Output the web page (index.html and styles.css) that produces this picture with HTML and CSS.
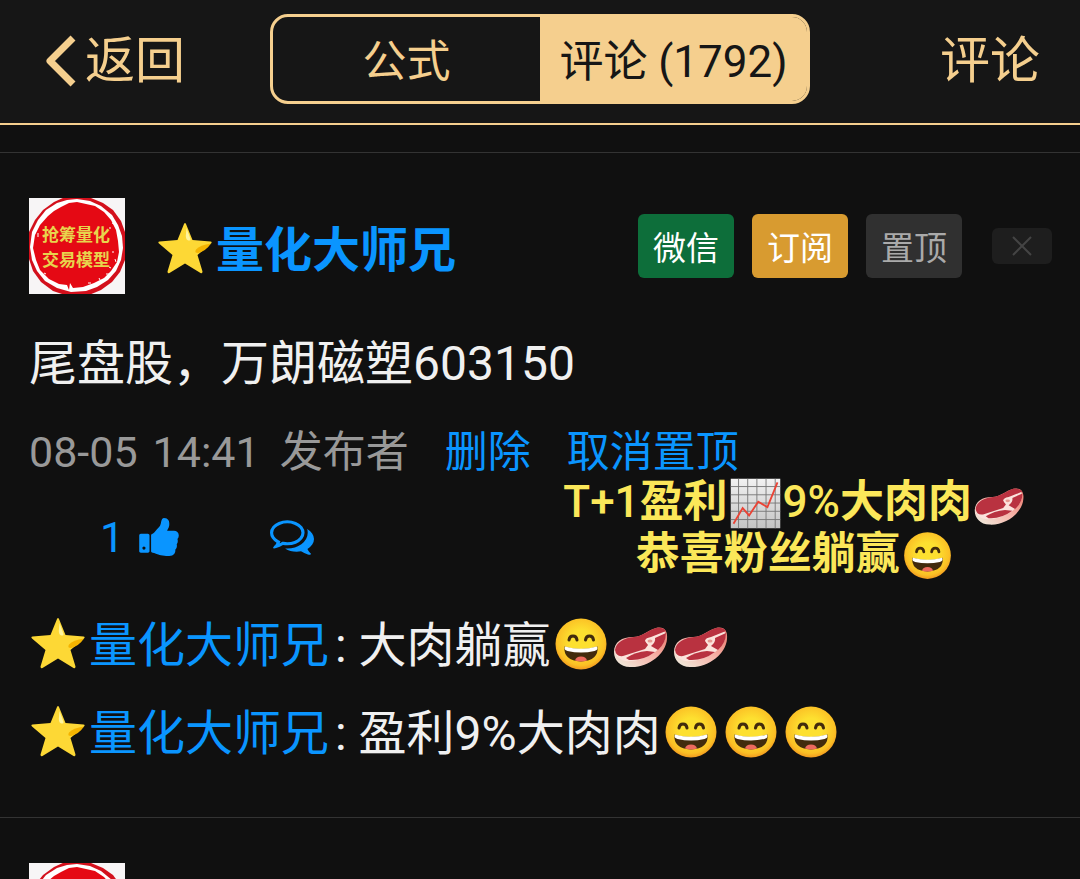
FILE: index.html
```html
<!DOCTYPE html>
<html lang="zh-CN">
<head>
    <meta charset="UTF-8">
    <meta name="viewport" content="width=device-width, initial-scale=1.0">
    <title>评论</title>
    <link rel="stylesheet" href="styles.css">
</head>
<body>

<!-- 图标定义 -->
<svg class="icon-defs" aria-hidden="true">
    <defs>
        <linearGradient id="paper" x1="0" y1="0" x2="0" y2="1">
            <stop offset="0" stop-color="#f2f2f2"/>
            <stop offset="1" stop-color="#c4c4c4"/>
        </linearGradient>
        <radialGradient id="face" cx="0.5" cy="0.45" r="0.55">
            <stop offset="0.4" stop-color="#fde030"/>
            <stop offset="0.85" stop-color="#fbc025"/>
            <stop offset="1" stop-color="#f29a1f"/>
        </radialGradient>
        <linearGradient id="fat" x1="1" y1="0" x2="0" y2="1">
            <stop offset="0.2" stop-color="#ee8c80"/>
            <stop offset="0.5" stop-color="#f7b5aa"/>
            <stop offset="0.9" stop-color="#f0e4d6"/>
        </linearGradient>
    </defs>
    <symbol id="star" viewBox="0 0 60 60">
        <path d="M28 5Q29 3 30 5L36.500 21L54.500 22.500Q56.500 23 55 24.500L41.500 36L46.500 52.500Q46.500 55 44.500 54L29 44.500L13.500 54Q11.500 55 11.500 52.500L16.500 36L3 24.500Q1.500 23 3.500 22.500L21.500 21Z" fill="#fdd835"/>
        <path d="M30.500 9L34.500 20Q35 22 32.500 21.500Q30 21 29.800 17Z" fill="#fff59d"/>
        <path d="M55 24.500Q50 32 42 34Q38 34 40 30.500Q44 26 55 24.500Z" fill="#f4b400"/>
    </symbol>
    <symbol id="smile" viewBox="0 0 60 60">
        <circle cx="30" cy="30" r="25.500" fill="url(#face)"/>
        <path d="M18 26Q18.500 22 22 22T26 26M34.500 26Q35 22 38.500 22T42.500 26" fill="none" stroke="#422b0d" stroke-width="3" stroke-linecap="round"/>
        <path d="M13.500 32.500Q30 37.500 46.500 32.500Q48 46.500 30 47.500Q12 46.500 13.500 32.500Z" fill="#422b0d"/>
        <path d="M14 32.500Q30 37 46 32.500Q47.500 36 43.500 37Q30 40 16.500 37Q12.500 36 14 32.500Z" fill="#fff"/>
        <path d="M24 46.500Q25 42.500 30 42.500T36 46.500Q30 48.500 24 46.500Z" fill="#ed6a5e"/>
    </symbol>
    <symbol id="meat" viewBox="0 0 60 60">
        <path d="M3 38C3 28 11 23 22 23C31 23 37 16 45 14C53 12 57 17 56 25C55 40 37 54 19 53C9 53 3 46 3 38Z" fill="url(#fat)"/>
        <path d="M4 36C5 28 12 24 23 24C32 23 38 17 46 15C52 14 56 18 54 25C51 36 35 46 20 47C10 48 4 43 4 36Z" fill="#fbe3dc"/>
        <path d="M4 36C5 28 13 24 23 23C32 22 38 16 45 14Q52 13 55 17L40 23Q34 24 34 27L37 31L34 35L12 42Q5 43 4 36Z" fill="#b93240"/>
        <path d="M44 24L55 19Q55 29 47 36L40 32Q45 28 44 24Z" fill="#b93240"/>
        <path d="M15 44Q24 38 36 37L44 38Q32 47 18 46Z" fill="#b93240"/>
        <ellipse cx="39" cy="27" rx="4" ry="3" fill="#fbe3dc"/>
        <ellipse cx="39" cy="27" rx="2.500" ry="1.500" fill="#e79a92"/>
    </symbol>
    <symbol id="chart" viewBox="0 0 60 60">
        <path d="M3 3H57V57H3Z" fill="url(#paper)"/>
        <path d="M11.500 3V57M21.500 3V57M31.500 3V57M41.500 3V57M51.500 3V57M3 11.500H57M3 20.500H57M3 29.500H57M3 38.500H57M3 47.500H57" stroke="#777" stroke-width="1"/>
        <path d="M6 52L16 35L23 43L33 28L43 34L54 7" fill="none" stroke="#ea4335" stroke-width="2"/>
    </symbol>
    <symbol id="thumb" viewBox="64 128 1600 1536">
        <path d="M320 1344q0-26-19-45t-45-19q-27 0-45.500 19t-18.500 45q0 27 18.500 45.500t45.500 18.500q26 0 45-18.500t19-45.500zm160-512v640q0 26-19 45t-45 19h-288q-26 0-45-19t-19-45v-640q0-26 19-45t45-19h288q26 0 45 19t19 45zm1184 0q0 86-55 149 15 44 15 76 3 76-43 137 17 56 0 117-15 57-54 94 9 112-49 181-64 76-197 78h-129q-66 0-144-15.500t-121.500-29-120.500-39.500q-123-43-158-44-26-1-45-19.500t-19-44.500v-641q0-25 18-43.500t43-20.500q24-2 76-59t101-121q68-87 101-120 18-18 31-48t17.500-48.500 13.500-60.500q7-39 12.500-61t19.500-52 34-50q19-19 45-19 46 0 82.500 10.500t60 26 40 40.500 24 45 12 50 5 45 .5 39q0 38-9.500 76t-19 60-27.500 56q-3 6-10 18t-11 22-8 24h277q78 0 135 57t57 135z" fill="currentColor"/>
    </symbol>
    <symbol id="bubbles" viewBox="0 256 1792 1408">
        <path d="M704 384q-153 0-286 52t-211.500 141-78.500 191q0 82 53 158t149 132l97 56-35 84q34-20 62-39l44-31 53 10q78 14 153 14 153 0 286-52t211.500-141 78.500-191-78.500-191-211.500-141-286-52zm0-128q191 0 353.500 68.500t256.500 186.500 94 257-94 257-256.500 186.500-353.500 68.500q-86 0-176-16-124 88-278 128-36 9-86 16h-3q-11 0-20.500-8t-11.500-21q-1-3-1-6.500t.5-6.500 2-6l2.500-5 3.500-5.500 4-5 4.500-5 4-4.500q5-6 23-25t26-29.500 22.500-29 25-38.500 20.500-44q-124-72-195-177t-71-224q0-139 94-257t256.500-186.500 353.500-68.500zm822 1169q10 24 20.500 44t25 38.500 22.500 29 26 29.500 23 25q1 1 4 4.500t4.500 5 4 5 3.500 5.500l2.500 5 2 6 .5 6.500-1 6.500q-3 14-13 22t-22 7q-50-7-86-16-154-40-278-128-90 16-176 16-271 0-472-132 58 4 88 4 161 0 309-45t264-129q125-92 192-212t67-254q0-77-23-152 129 71 204 178t75 230q0 120-71 224.500t-195 176.500z" fill="currentColor"/>
    </symbol>
    <symbol id="seal" viewBox="0 0 96 96">
        <path d="M0 0H96V96H0Z" fill="#f7f5f6"/>
        <path d="M48 -1L62 0L74 5L84 12L92 23L96 34V62L91 74L83 84L72 92L60 97H36L24 93L12 84L4 73L0 61V34L6 22L14 12L25 4L36 -1Z" fill="#d3101c"/>
        <path d="M48 1L61 3L72 8L83 17L89 27L93 38L94 50L92 62L87 73L79 82L68 89L57 93L42 94L28 90L16 83L8 73L3 62L1 49L3 34L9 22L17 12L28 5L38 2Z" fill="#fff"/>
        <path d="M48 4L57 6L66 8L75 14L82 22L87 32L89 43L90 54L88 64L82 73L75 80L65 85L54 89L44 90L41 85L40 92L38 87L30 86L20 81L11 72L7 62L4 50L6 37L11 27L19 18L25 13L32 9L40 5Z" fill="#e50914"/>
        <path d="M83 25l2 1M80 30l2 0M86 61l1 3M80 69l2 1M77 76l3 0M70 80l1 2M83 54l2 0M59 85l3 0M9 35l0 4M15 75l2 1" stroke="#fff" stroke-width="1"/>
    </symbol>
</svg>

<div class="app">
    <!-- 顶部导航 -->
    <header class="topbar">
        <a class="back" href="#">
            <svg class="chevron" viewBox="0 0 30 52" aria-hidden="true">
                <path d="M27 3L4 26L27 49" fill="none" stroke="currentColor" stroke-width="7" stroke-linejoin="round"/>
            </svg>
            返回
        </a>
        <nav class="tabs">
            <button class="tab" type="button">公式</button>
            <button class="tab active" type="button">评论 (1792)</button>
        </nav>
        <a class="write" href="#">评论</a>
    </header>

    <!-- 评论列表 -->
    <main class="feed">
        <article class="post">
            <div class="post-head">
                <svg class="avatar" viewBox="0 0 96 96">
                    <use href="#seal"/>
                    <text class="seal-text" x="47" y="43">抢筹量化</text>
                    <text class="seal-text" x="47" y="68">交易模型</text>
                </svg>
                <a class="author" href="#"><svg class="emoji" aria-hidden="true"><use href="#star"/></svg>量化大师兄</a>
                <div class="tools">
                    <button class="tool wechat" type="button">微信</button>
                    <button class="tool subscribe" type="button">订阅</button>
                    <button class="tool pin" type="button">置顶</button>
                </div>
                <button class="close" type="button" aria-label="关闭">
                    <svg class="cross" viewBox="0 0 20 20" aria-hidden="true">
                        <path d="M1 1L19 19M19 1L1 19" stroke="currentColor" stroke-width="2"/>
                    </svg>
                </button>
            </div>

            <p class="message">尾盘股，万朗磁塑603150</p>

            <div class="meta">
                <div class="posted">
                    <time><span class="day">08-05</span>14:41</time>
                    <span>发布者</span>
                </div>
                <a href="#">删除</a>
                <a href="#">取消置顶</a>
            </div>

            <div class="actions">
                <button class="action" type="button" aria-label="点赞">1 <svg class="thumb" aria-hidden="true"><use href="#thumb"/></svg></button>
                <button class="action" type="button" aria-label="回复"><svg class="bubbles" aria-hidden="true"><use href="#bubbles"/></svg></button>
            </div>

            <!-- 叠加在帖子上的黄色文字 -->
            <div class="caption">
                <span class="latin">T+1</span>盈利<svg class="emoji" aria-hidden="true"><use href="#chart"/></svg><span class="latin">9%</span>大肉肉<svg class="emoji" aria-hidden="true"><use href="#meat"/></svg><br>
                恭喜粉丝躺赢<svg class="emoji" aria-hidden="true"><use href="#smile"/></svg>
            </div>

            <div class="replies">
                <p class="reply"><a href="#"><svg class="emoji" aria-hidden="true"><use href="#star"/></svg>量化大师兄</a>: 大肉躺赢<svg class="emoji" aria-hidden="true"><use href="#smile"/></svg><svg class="emoji" aria-hidden="true"><use href="#meat"/></svg><svg class="emoji" aria-hidden="true"><use href="#meat"/></svg></p>
                <p class="reply"><a href="#"><svg class="emoji" aria-hidden="true"><use href="#star"/></svg>量化大师兄</a>: 盈利9%大肉肉<svg class="emoji" aria-hidden="true"><use href="#smile"/></svg><svg class="emoji" aria-hidden="true"><use href="#smile"/></svg><svg class="emoji" aria-hidden="true"><use href="#smile"/></svg></p>
            </div>
        </article>

        <article class="post">
            <div class="post-head">
                <svg class="avatar" viewBox="0 0 96 96" aria-hidden="true"><use href="#seal"/></svg>
            </div>
        </article>
    </main>
</div>

</body>
</html>
```
FILE: styles.css
```css
* {
    box-sizing: border-box;
}

body {
    margin: 0;
    background: #101010;
    color: #f0f0f0;
    font-family: Roboto, "Noto Sans CJK SC", sans-serif;
    font-size: 48px;
}

a {
    color: #0a95ff;
    text-decoration: none;
}

button {
    padding: 0;
    border: none;
    background: none;
    color: inherit;
    font-family: inherit;
    cursor: pointer;
}

.icon-defs {
    display: block;
    width: 0;
    height: 0;
}

.app {
    display: flex;
    flex-direction: column;
    height: 100vh;
}

/* 顶部导航 */
.topbar {
    display: flex;
    align-items: center;
    padding: 14px 40px 19px;
    background: #161616;
    border-bottom: 2px solid #f5cf8e;
}

.back,
.write {
    flex: 1;
    padding-top: 4px;
    color: #f5cf8e;
    font-size: 50px;
    line-height: 64px;
}

.back {
    display: flex;
    align-items: center;
    gap: 9px;
}

.write {
    text-align: right;
}

.chevron {
    width: 30px;
    height: 52px;
    margin-left: 6px;
}

.tabs {
    display: flex;
    width: 50vw;
    height: 90px;
    border: 3px solid #f5cf8e;
    border-radius: 18px;
    overflow: hidden;
}

.tab {
    flex: 1 1 0;
    padding-bottom: 2px;
    color: #f5cf8e;
    font-size: 44px;
}

.tab.active {
    background: #f5cf8e;
    color: #161616;
}

/* 评论列表 */
.feed {
    flex: 1;
    min-height: 0;
    padding-top: 27px;
    overflow-y: auto;
    scrollbar-width: none;
}

.post {
    position: relative;
    padding: 45px 28px 39px 29px;
    border-top: 1px solid #333;
}

.post-head {
    display: flex;
    align-items: center;
}

.avatar {
    width: 96px;
    height: 96px;
}

.seal-text {
    fill: #e8d44d;
    font-family: "Noto Sans CJK SC", sans-serif;
    font-size: 17px;
    font-weight: 700;
    text-anchor: middle;
}

.author {
    margin-left: 31px;
    font-weight: 700;
}

.emoji {
    width: 60px;
    height: 60px;
    vertical-align: -12px;
}

.tools {
    display: flex;
    gap: 18px;
    margin-left: auto;
}

.tool {
    width: 96px;
    height: 64px;
    border-radius: 6px;
    font-size: 33px;
}

.wechat {
    background: #0d6e3a;
    color: #fff;
}

.subscribe {
    background: #d89b30;
    color: #fff;
}

.pin {
    background: #303030;
    color: #aaa;
}

.close {
    display: flex;
    align-items: center;
    justify-content: center;
    width: 60px;
    height: 36px;
    margin-left: 30px;
    border-radius: 6px;
    background: #1e1e1e;
    color: #444;
}

.cross {
    width: 20px;
    height: 20px;
}

.message {
    margin: 34px 0 22px;
    line-height: 72px;
}

.meta {
    display: flex;
    gap: 36px;
    color: #999;
    font-size: 43px;
    line-height: 60px;
}

.posted {
    display: flex;
    gap: 20px;
}

.day {
    margin-right: 15px;
}

/* 点赞和回复 */
.actions {
    display: flex;
    align-items: center;
    gap: 91px;
    height: 60px;
    margin-top: 25px;
    padding-left: 71px;
}

.action {
    display: flex;
    align-items: center;
    gap: 15px;
    color: #0a95ff;
    font-size: 43px;
    line-height: 60px;
}

.thumb {
    width: 40px;
    height: 38px;
}

.bubbles {
    width: 44px;
    height: 35px;
}

.caption {
    position: absolute;
    top: 323px;
    right: 53px;
    color: #fbe759;
    font-size: 44px;
    font-weight: 700;
    line-height: 52px;
    text-align: center;
}

.caption .latin {
    font-weight: 500;
}

.caption .emoji {
    width: 55px;
    height: 55px;
    margin: -4px 0;
    vertical-align: -10px;
}

.replies {
    margin-top: 35px;
}

.reply {
    margin: 0;
    line-height: 88px;
}

.reply a {
    margin-right: 6px;
}
```
